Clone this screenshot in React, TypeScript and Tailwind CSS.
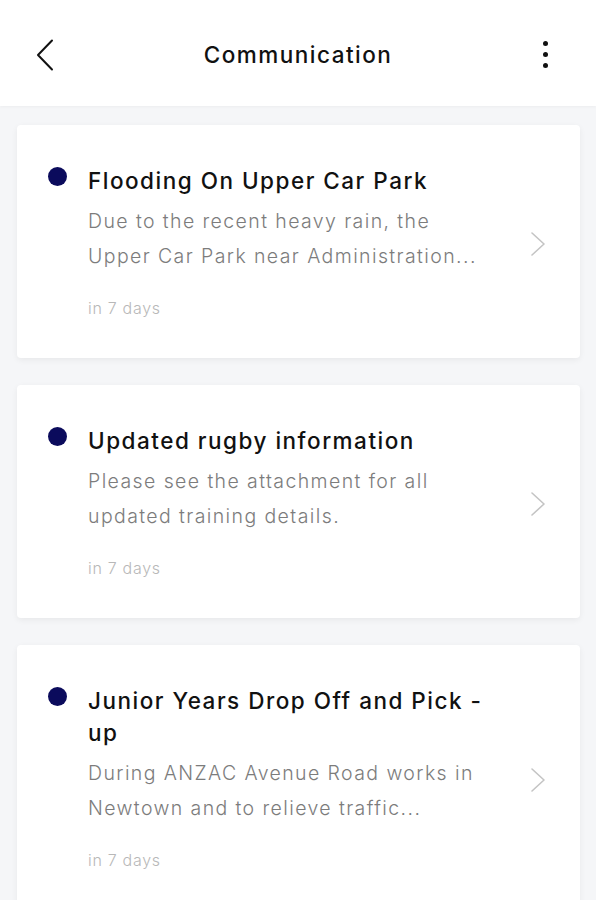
import React from "react";

const items = [
  {
    title: "Flooding On Upper Car Park",
    body: "Due to the recent heavy rain, the Upper Car Park near Administration...",
  },
  {
    title: "Updated rugby information",
    body: "Please see the attachment for all updated training details.",
  },
  {
    title: "Junior Years Drop Off and Pick - up",
    body: "During ANZAC Avenue Road works in Newtown and to relieve traffic...",
  },
];

function Card({ title, body }: { title: string; body: string }) {
  return (
    <div className="bg-white rounded-[4px] shadow-[0_2px_6px_rgba(0,0,0,0.06)] flex items-center pl-[31px] pr-[34px] pt-[40px] pb-[40px]">
      <div className="flex flex-1 items-start">
        <div className="w-[19px] h-[19px] rounded-full bg-[#0b0b5c] mt-[2px] shrink-0" />
        <div className="ml-[21px] w-[396px]">
          <div className="text-[22.5px] leading-[32px] text-[#111] font-medium tracking-[1.5px]">{title}</div>
          <div className="mt-[7px] text-[19.5px] leading-[35px] text-[#7c7c7c] font-light tracking-[1.4px]">{body}</div>
          <div className="mt-[24px] text-[16px] leading-[20px] text-[#b8b8b8] font-light tracking-[0.7px]">in 7 days</div>
        </div>
      </div>
      <svg width="16" height="26" viewBox="0 0 16 26" fill="none" className="shrink-0 mt-[4px]">
        <path d="M2 2 L14 13 L2 24" stroke="#c4c4c4" strokeWidth="1.6" strokeLinecap="round" strokeLinejoin="round" />
      </svg>
    </div>
  );
}

export default function App() {
  return (
    <div className="w-[596px] h-[900px] overflow-hidden bg-[#f5f6f8]" style={{ fontFamily: "Inter, 'Noto Sans', sans-serif" }}>
      <header className="h-[106px] bg-white flex items-center pt-[3px] shadow-[0_1px_3px_rgba(0,0,0,0.04)] relative z-10">
        <div className="w-[90px] pl-[36px] flex items-center">
          <svg width="18" height="32" viewBox="0 0 18 32" fill="none">
            <path d="M16 1.5 L2 16 L16 30.5" stroke="#111" strokeWidth="2" strokeLinecap="round" strokeLinejoin="round" />
          </svg>
        </div>
        <div className="flex-1 text-center text-[22.5px] font-medium text-[#111] tracking-[1.5px]">Communication</div>
        <div className="w-[90px] pr-[48px] flex justify-end">
          <div className="flex flex-col items-center gap-[6px] w-[5px]">
            <span className="w-[5px] h-[5px] rounded-full bg-[#111]" />
            <span className="w-[5px] h-[5px] rounded-full bg-[#111]" />
            <span className="w-[5px] h-[5px] rounded-full bg-[#111]" />
          </div>
        </div>
      </header>
      <main className="flex flex-col gap-[27px] pt-[19px] pl-[17px] pr-[16px]">
        {items.map((it) => (
          <Card key={it.title} title={it.title} body={it.body} />
        ))}
      </main>
    </div>
  );
}
